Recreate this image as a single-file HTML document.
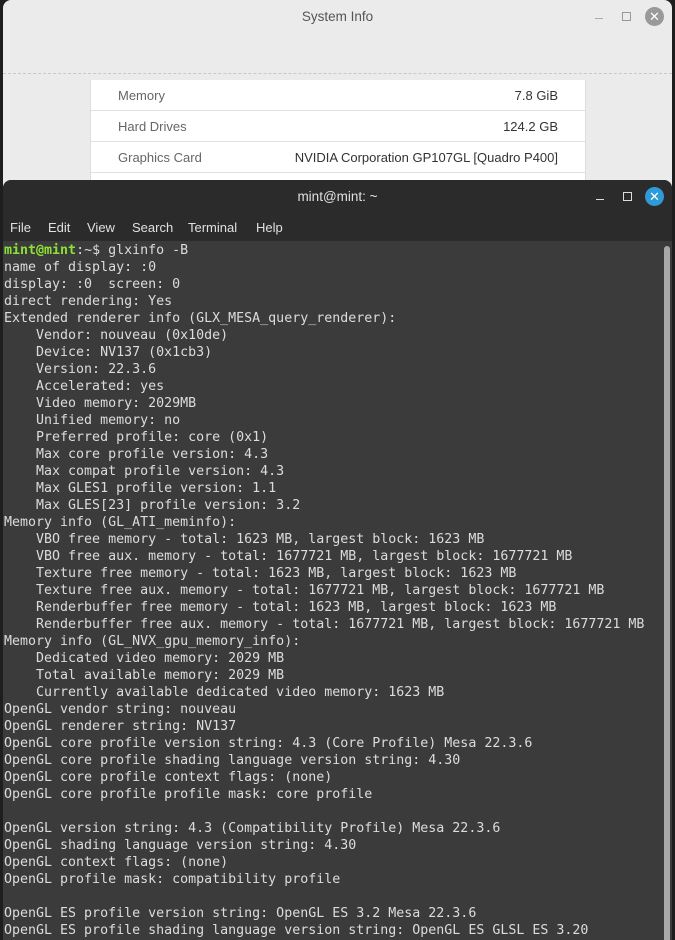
<!DOCTYPE html>
<html><head><meta charset="utf-8"><style>
*{margin:0;padding:0;box-sizing:border-box}
body{width:675px;height:940px;overflow:hidden;background:#1e1e1e;font-family:"Liberation Sans","DejaVu Sans",sans-serif;position:relative}
#sys{position:absolute;left:3px;top:0;width:669px;height:200px;background:#ebebeb;border-radius:8px 8px 0 0}
#sys .title{position:absolute;left:0;right:0;top:9px;text-align:center;font-size:13.5px;color:#555}
#sys .dash{position:absolute;left:0;right:0;top:73px;border-top:1px dashed #c8c8c8}
#sys .panel{position:absolute;left:87px;top:80px;width:496px;height:120px;background:#fff;border-left:1px solid #ddd;border-right:1px solid #ddd}
.row{position:absolute;left:0;right:0;height:31px;border-bottom:1px solid #e0e0e0;font-size:13px}
.row .k{position:absolute;left:27px;top:8px;color:#666}
.row .v{position:absolute;right:27px;top:8px;color:#333}
#term{position:absolute;left:3px;top:180px;width:669px;height:760px;background:#3b3b3b;border-radius:8px 8px 0 0;overflow:hidden}
#tb{position:absolute;left:0;right:0;top:0;height:61px;background:#2b2b2b}
#tb .t{position:absolute;left:0;right:0;top:9px;text-align:center;color:#e0e0e0;font-size:13.5px}
.menu{position:absolute;top:40px;font-size:13px;color:#e0e0e0}
pre{position:absolute;left:1px;top:62px;font-family:"DejaVu Sans Mono","Liberation Mono",monospace;font-size:13.3px;line-height:17px;color:#dcdcdc}
.g{color:#8ae234;font-weight:bold}
#sb{position:absolute;left:661px;top:66px;width:6px;height:700px;background:#a8a8a8;border-radius:3px}
</style></head><body>
<div id="sys">
<div class="title">System Info</div>
<div style="position:absolute;left:592px;top:18px;width:8px;border-top:1px solid #aaa"></div>
<div style="position:absolute;left:619px;top:12px;width:9px;height:9px;border:1px solid #999"></div>
<div style="position:absolute;left:642px;top:7px;width:19px;height:19px;border-radius:50%;background:#999;color:#fff;font-size:13px;text-align:center;line-height:19px;font-weight:bold">✕</div>
<div class="dash"></div>
<div class="panel">
<div class="row" style="top:0"><span class="k">Memory</span><span class="v">7.8 GiB</span></div>
<div class="row" style="top:31px"><span class="k">Hard Drives</span><span class="v">124.2 GB</span></div>
<div class="row" style="top:62px"><span class="k">Graphics Card</span><span class="v">NVIDIA Corporation GP107GL [Quadro P400]</span></div>
</div>
</div>
<div id="term">
<div id="tb"><div class="t">mint@mint: ~</div>
<div style="position:absolute;left:593px;top:19px;width:8px;border-top:1px solid #ddd"></div>
<div style="position:absolute;left:620px;top:12px;width:9px;height:9px;border:1px solid #ddd"></div>
<div style="position:absolute;left:642px;top:7px;width:19px;height:19px;border-radius:50%;background:#2e9ad8;color:#fff;font-size:13px;text-align:center;line-height:19px;font-weight:bold">✕</div>
<span class="menu" style="left:7px">File</span><span class="menu" style="left:45px">Edit</span><span class="menu" style="left:84px">View</span><span class="menu" style="left:129px">Search</span><span class="menu" style="left:185px">Terminal</span><span class="menu" style="left:253px">Help</span>
</div>
<pre><span class="g">mint@mint</span>:~$ glxinfo -B
name of display: :0
display: :0  screen: 0
direct rendering: Yes
Extended renderer info (GLX_MESA_query_renderer):
    Vendor: nouveau (0x10de)
    Device: NV137 (0x1cb3)
    Version: 22.3.6
    Accelerated: yes
    Video memory: 2029MB
    Unified memory: no
    Preferred profile: core (0x1)
    Max core profile version: 4.3
    Max compat profile version: 4.3
    Max GLES1 profile version: 1.1
    Max GLES[23] profile version: 3.2
Memory info (GL_ATI_meminfo):
    VBO free memory - total: 1623 MB, largest block: 1623 MB
    VBO free aux. memory - total: 1677721 MB, largest block: 1677721 MB
    Texture free memory - total: 1623 MB, largest block: 1623 MB
    Texture free aux. memory - total: 1677721 MB, largest block: 1677721 MB
    Renderbuffer free memory - total: 1623 MB, largest block: 1623 MB
    Renderbuffer free aux. memory - total: 1677721 MB, largest block: 1677721 MB
Memory info (GL_NVX_gpu_memory_info):
    Dedicated video memory: 2029 MB
    Total available memory: 2029 MB
    Currently available dedicated video memory: 1623 MB
OpenGL vendor string: nouveau
OpenGL renderer string: NV137
OpenGL core profile version string: 4.3 (Core Profile) Mesa 22.3.6
OpenGL core profile shading language version string: 4.30
OpenGL core profile context flags: (none)
OpenGL core profile profile mask: core profile

OpenGL version string: 4.3 (Compatibility Profile) Mesa 22.3.6
OpenGL shading language version string: 4.30
OpenGL context flags: (none)
OpenGL profile mask: compatibility profile

OpenGL ES profile version string: OpenGL ES 3.2 Mesa 22.3.6
OpenGL ES profile shading language version string: OpenGL ES GLSL ES 3.20</pre>
<div id="sb"></div>
</div>
</body></html>
